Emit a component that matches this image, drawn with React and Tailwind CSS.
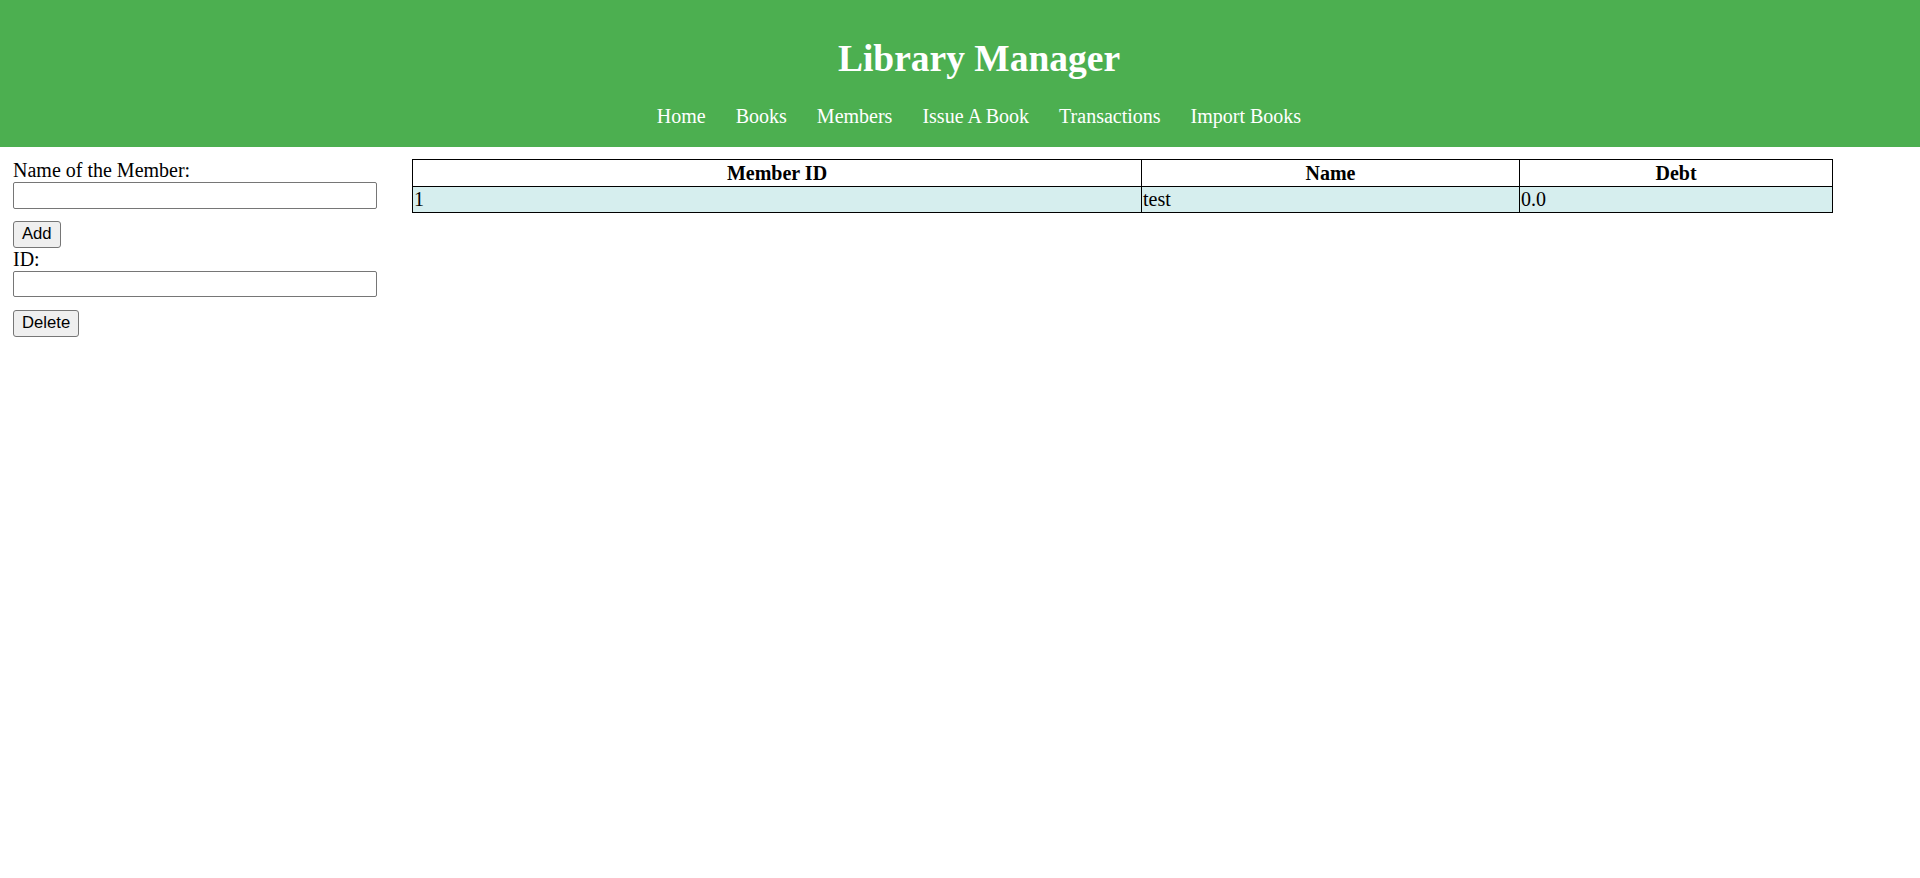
import React, { useState } from 'react';

const serif = { fontFamily: '"Liberation Serif", "Times New Roman", serif' };

const navLinks = ['Home', 'Books', 'Members', 'Issue A Book', 'Transactions', 'Import Books'];

const members = [{ id: 1, name: 'test', debt: '0.0' }];

function Header() {
    return (
        <header className="bg-[#4CAF50] text-white text-center pt-[36px] pb-[19px] pl-[38px]">
            <h1 className="text-[37.5px] font-bold leading-[46px]">Library Manager</h1>
            <nav className="mt-[23px] flex justify-center text-[20px] leading-[23px]">
                {navLinks.map((link) => (
                    <a key={link} href="#" className="px-[15px] text-white">
                        {link}
                    </a>
                ))}
            </nav>
        </header>
    );
}

function Button({ children }) {
    return (
        <button
            type="button"
            className="h-[27px] px-[8px] bg-[#efefef] border border-[#767676] rounded-[3px] text-[16.67px] text-black leading-none"
            style={{ fontFamily: '"Liberation Sans", Arial, sans-serif' }}
        >
            {children}
        </button>
    );
}

// Left side with the add / delete member forms
function MemberForms() {
    const [name, setName] = useState('');
    const [id, setId] = useState('');

    return (
        <div className="w-[399px] shrink-0 text-[20px] leading-[23px] text-black">
            <label className="block" htmlFor="memberName">Name of the Member:</label>
            <input
                id="memberName"
                type="text"
                value={name}
                onChange={(e) => setName(e.target.value)}
                className="block w-[364px] h-[27px] border border-[#767676] rounded-[2px] bg-white"
            />
            <div className="mt-[12px]">
                <Button>Add</Button>
            </div>
            <label className="block" htmlFor="memberId">ID:</label>
            <input
                id="memberId"
                type="text"
                value={id}
                onChange={(e) => setId(e.target.value)}
                className="block w-[364px] h-[26px] border border-[#767676] rounded-[2px] bg-white"
            />
            <div className="mt-[13px]">
                <Button>Delete</Button>
            </div>
        </div>
    );
}

function MembersTable() {
    return (
        <table className="w-[1421px] border-collapse text-[20px] leading-[23px] text-black">
            <thead>
                <tr className="h-[27px]">
                    <th className="w-[729px] border border-black font-bold text-center p-0">Member ID</th>
                    <th className="w-[378px] border border-black font-bold text-center p-0">Name</th>
                    <th className="border border-black font-bold text-center p-0">Debt</th>
                </tr>
            </thead>
            <tbody>
                {members.map((m) => (
                    <tr key={m.id} className="h-[26px] bg-[#D6EEEE]">
                        <td className="border border-black text-left px-[1px] py-0">{m.id}</td>
                        <td className="border border-black text-left px-[1px] py-0">{m.name}</td>
                        <td className="border border-black text-left px-[1px] py-0">{m.debt}</td>
                    </tr>
                ))}
            </tbody>
        </table>
    );
}

export default function App() {
    return (
        <div className="min-h-screen bg-white" style={serif}>
            <Header />
            <main className="flex items-start pl-[13px] pt-[12px]">
                <MemberForms />
                <MembersTable />
            </main>
        </div>
    );
}
